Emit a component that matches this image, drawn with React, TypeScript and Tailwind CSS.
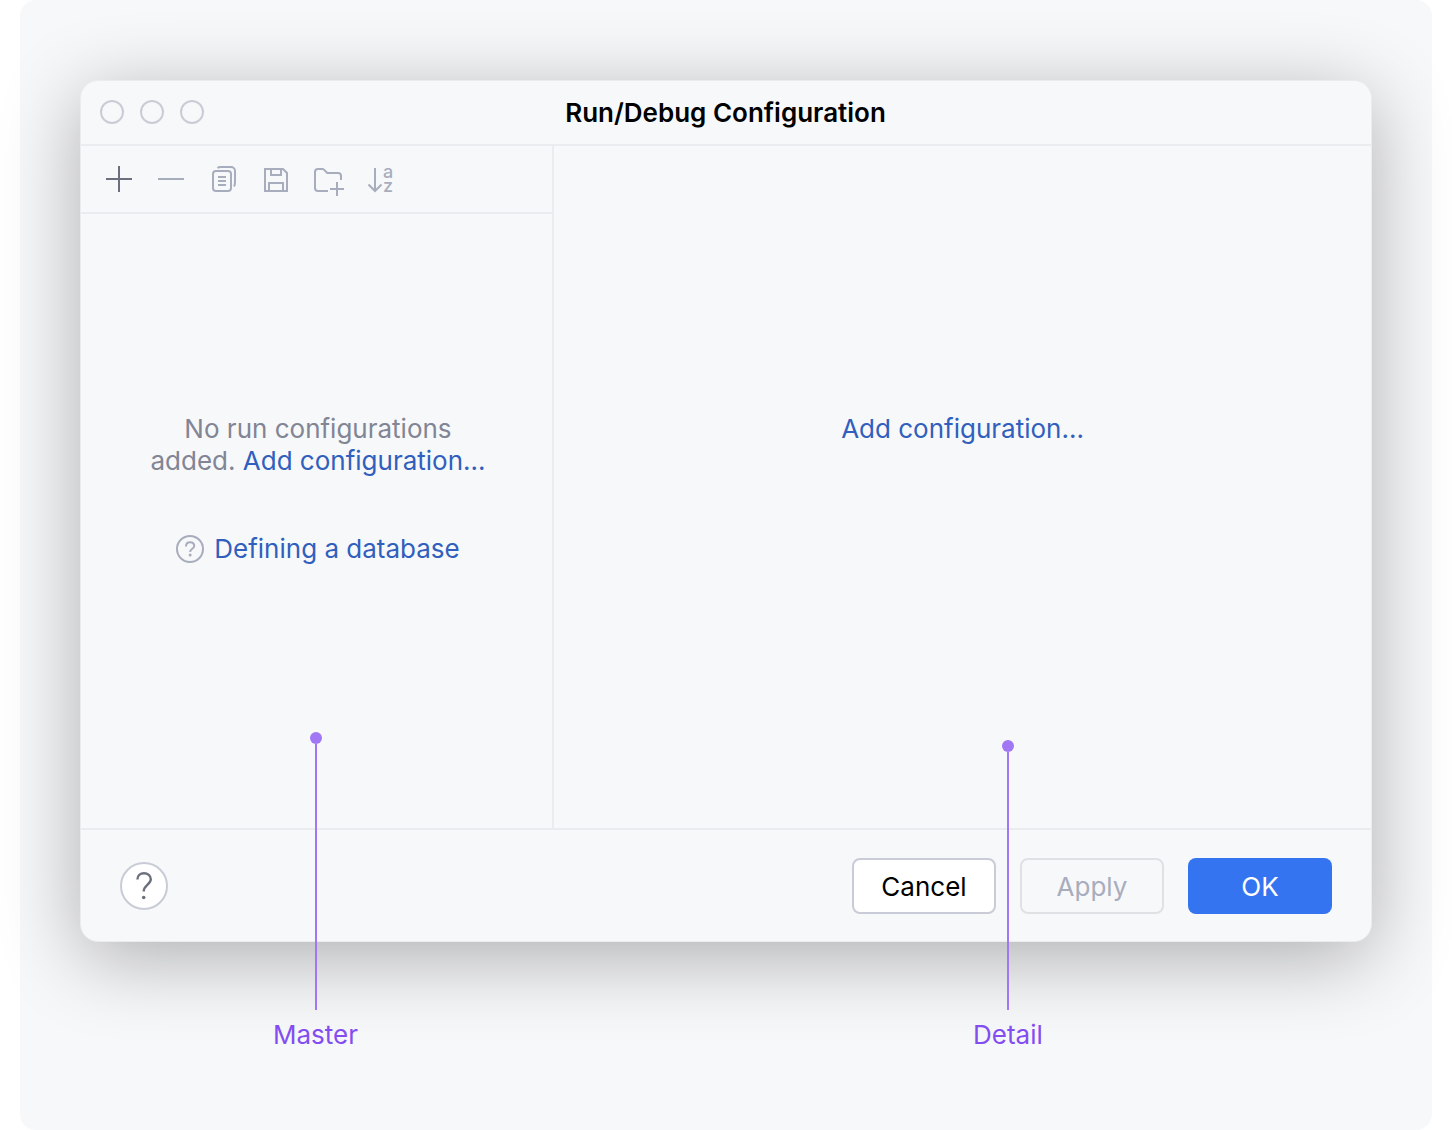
import type { ReactNode } from "react";

function ToolButton({ label, muted = true, children }: { label: string; muted?: boolean; children: ReactNode }) {
  return (
    <button type="button" aria-label={label} className={muted ? "size-8 text-[#a8adbd]" : "size-8 text-[#6c707e]"}>
      <svg viewBox="0 0 32 32" className="size-8 overflow-visible" fill="none" stroke="currentColor" strokeWidth="2">
        {children}
      </svg>
    </button>
  );
}

function Toolbar() {
  return (
    <div className="flex h-[68px] items-center gap-5 border-b-2 border-[#ebecf0] pl-[22px]">
      <ToolButton label="Add" muted={false}>
        <path d="M3 16H29M16 3V29" />
      </ToolButton>
      <ToolButton label="Remove">
        <path d="M3 16H29" />
      </ToolButton>
      <ToolButton label="Copy">
        <rect x="6" y="8" width="18" height="20" rx="3" />
        <path d="M10.5 5C11.3 4.3 12.3 4 13.5 4H24a4 4 0 0 1 4 4V19C28 21 27.7 22.5 27 23.5" />
        <path d="M11 14H19M11 18H19M11 22H19" />
      </ToolButton>
      <ToolButton label="Save">
        <path d="M6 6H24L28 10V28H6Z" />
        <path d="M12 6V12H22V6M10 28V20H24V28" />
      </ToolButton>
      <ToolButton label="New folder">
        <path d="M17 28H7a3 3 0 0 1-3-3V9a3 3 0 0 1 3-3H11.5a2 2 0 0 1 1.4.6L16.3 10H27a3 3 0 0 1 3 3V17" />
        <path d="M19 26H33M26 19V33" />
      </ToolButton>
      <ToolButton label="Sort alphabetically">
        <path d="M12 5V28M5.5 21.5L12 28L18.5 21.5" />
        <text x="20" y="15" fontSize="18" fontWeight="500" fill="currentColor" stroke="none">
          a
        </text>
        <text x="20" y="29" fontSize="18" fontWeight="500" fill="currentColor" stroke="none">
          z
        </text>
      </ToolButton>
    </div>
  );
}

function Callout({ label, stem, place }: { label: string; stem: string; place: string }) {
  return (
    <div className={`absolute -bottom-[223px] flex w-0.5 flex-col items-center text-[#834df0] ${place}`}>
      <span className="size-3 shrink-0 rounded-full bg-[#a177f4]" />
      <span className={`w-0.5 bg-[#a177f4] ${stem}`} />
      <span className="mt-[9px] whitespace-nowrap">{label}</span>
    </div>
  );
}

const link = "text-[#315fbd]";
const action = "h-14 w-36 rounded-lg";

export default function App() {
  return (
    <div className="min-h-screen bg-white px-5 font-['Inter',sans-serif] text-[26px] leading-8 font-[430]">
      <main className="min-h-screen rounded-[16px] bg-[#f7f8fa] px-[60px] pt-20">
        <section
          aria-labelledby="dialog-title"
          className="rounded-[18px] border border-[#ebecf0] bg-[#f7f8fa] shadow-[0_16px_80px_rgba(0,0,0,0.3)]"
        >
          <header className="grid h-[65px] grid-cols-[1fr_auto_1fr] items-center border-b-2 border-[#ebecf0] pr-5 pl-[19px]">
            <div className="flex gap-4 pb-0.5">
              <button type="button" aria-label="Close" className="size-6 rounded-full border-2 border-[#c9ccd6]" />
              <button type="button" aria-label="Minimize" className="size-6 rounded-full border-2 border-[#c9ccd6]" />
              <button type="button" aria-label="Zoom" className="size-6 rounded-full border-2 border-[#c9ccd6]" />
            </div>
            <h1 id="dialog-title" className="font-semibold text-black">
              Run/Debug Configuration
            </h1>
          </header>

          <div className="flex min-h-[682px]">
            <div className="relative w-[473px] shrink-0 border-r-2 border-[#ebecf0]">
              <Toolbar />
              <div className="flex flex-col items-center gap-14 pt-[199px] pl-[3px]">
                <p className="text-center text-[#818594]">
                  No run configurations
                  <br />
                  added.{" "}
                  <a href="#add" className={link}>
                    Add configuration...
                  </a>
                </p>
                <a href="#database" className={`flex items-center gap-2.5 ${link}`}>
                  <svg viewBox="0 0 28 28" className="size-7" fill="none" stroke="#a8adbd" strokeWidth="2">
                    <circle cx="14" cy="14" r="13" />
                    <path d="M10 11.5C10 9 11.7 7.2 14.1 7.2S18.2 8.8 18.2 11C18.2 13.8 14.1 13.8 14.1 17" />
                    <circle cx="14.1" cy="20" r="1.5" fill="#a8adbd" stroke="none" />
                  </svg>
                  Defining a database
                </a>
              </div>
              <Callout label="Master" stem="h-[266px]" place="left-1/2 -ml-0.5" />
            </div>
            <div className="relative flex grow justify-center pt-[267px]">
              <a href="#add" className={`self-start ${link}`}>
                Add configuration...
              </a>
              <Callout label="Detail" stem="h-[258px]" place="left-5/9 -ml-px" />
            </div>
          </div>

          <footer className="flex h-[113px] items-center justify-between border-t-2 border-[#ebecf0] px-[39px]">
            <button
              type="button"
              aria-label="Help"
              className="flex size-12 items-center justify-center rounded-full border-2 border-[#c9ccd6] bg-white"
            >
              <svg viewBox="0 0 32 32" className="size-8" fill="none" stroke="#6c707e" strokeWidth="2.4">
                <path d="M9.4 9.5C9.4 5.8 12.3 3.2 16 3.2S22.8 5.7 22.8 9.3C22.8 14.5 15.7 15 15.7 21.5" />
                <circle cx="15.7" cy="27.5" r="1.8" fill="#6c707e" stroke="none" />
              </svg>
            </button>
            <div className="flex gap-6">
              <button type="button" className={`${action} border-2 border-[#c9ccd6] bg-white pt-0.5 text-black`}>
                Cancel
              </button>
              <button type="button" disabled className={`${action} border-2 border-[#dfe1e5] pt-0.5 text-[#a8adbd]`}>
                Apply
              </button>
              <button type="button" className={`${action} bg-[#3574f0] pt-0.5 text-white`}>
                OK
              </button>
            </div>
          </footer>
        </section>
      </main>
    </div>
  );
}
